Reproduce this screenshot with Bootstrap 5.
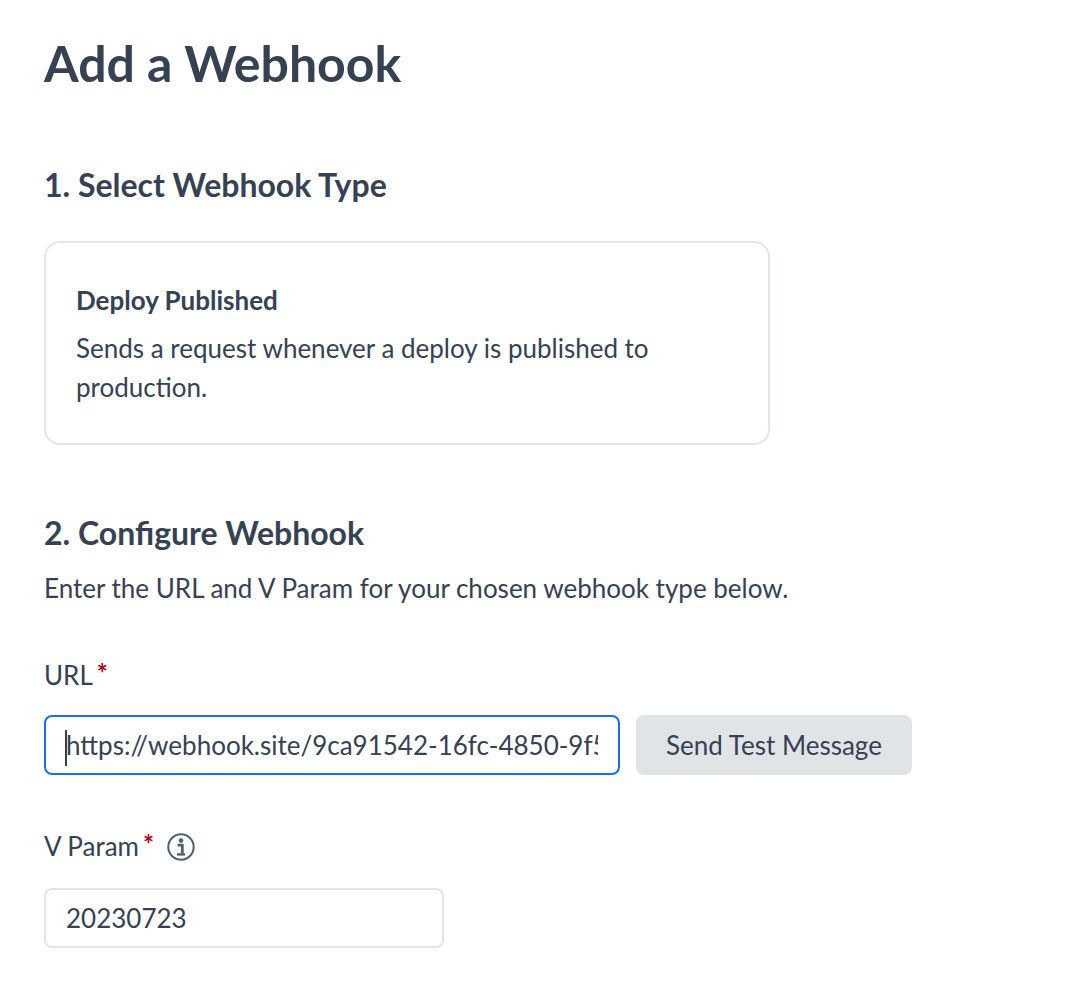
<!DOCTYPE html>
<html lang="en">
<head>
<meta charset="utf-8">
<title>Add a Webhook</title>
<link href="https://cdn.jsdelivr.net/npm/bootstrap@5.3.0/dist/css/bootstrap.min.css" rel="stylesheet">
<style>
body{font-family:Lato,"Liberation Sans",sans-serif;color:#364154;background:#fff;font-size:26px;line-height:39px}
.wh-page{padding:33px 0 0 44px;width:1092px}
.wh-title{font-size:50px;font-weight:700;line-height:60px;margin:0;color:#364154}
.wh-h2{font-size:32px;font-weight:700;line-height:40px;margin:0;color:#364154}
.wh-s1{margin-top:72px}
.wh-box{margin-top:36px;width:726px;height:204px;border:2px solid #e2e5e9;border-radius:16px;padding:38px 30px}
.wh-box-title{font-weight:700;font-size:26px;line-height:39px;margin-bottom:9px}
.wh-s2{margin-top:68px}
.wh-desc{margin-top:16px;margin-bottom:0}
.wh-label{line-height:39px;margin:0}
.wh-req{color:#b3001e;font-size:26px;font-weight:700;line-height:20px;margin-left:4px;margin-bottom:5px}
.wh-url-label{margin-top:48px}
.wh-url-row{margin-top:20px}
.wh-input{font-family:inherit;font-size:26px;color:#364154;height:60px;border-radius:8px;padding:0 20px;background:#fff;outline:0}
.wh-url{width:576px;border:2px solid #1a6cf5;caret-color:#364154}
.wh-btn{height:60px;width:276px;background:#e1e4e7;border:0;border-radius:8px;color:#364154;font-size:26px;padding:0}
.wh-v-label{margin-top:52px}
.wh-v{width:400px;border:2px solid #e2e5e9;margin-top:22px;display:block}
.wh-cursor{position:absolute;left:21px;top:15px;width:2px;height:36px;background:#364154}
.wh-url-wrap{width:576px}
.wh-info{margin-left:13px}
</style>
</head>
<body>
<div class="wh-page">
  <h1 class="wh-title">Add a Webhook</h1>
  <h2 class="wh-h2 wh-s1">1. Select Webhook Type</h2>
  <div class="wh-box">
    <div class="wh-box-title">Deploy Published</div>
    <div>Sends a request whenever a deploy is published to production.</div>
  </div>
  <h2 class="wh-h2 wh-s2">2. Configure Webhook</h2>
  <p class="wh-desc">Enter the URL and V Param for your chosen webhook type below.</p>
  <p class="wh-label wh-url-label d-flex align-items-center">URL<span class="wh-req">*</span></p>
  <div class="d-flex gap-3 wh-url-row">
    <div class="position-relative wh-url-wrap">
      <input class="wh-input wh-url" type="text" value="https://webhook.site/9ca91542-16fc-4850-9f5e-2b7d">
      <span class="wh-cursor"></span>
    </div>
    <button class="btn wh-btn" type="button">Send Test Message</button>
  </div>
  <p class="wh-label wh-v-label d-flex align-items-center">V Param<span class="wh-req">*</span>
    <svg class="wh-info" width="28" height="28" viewBox="0 0 28 28" fill="none" stroke="#4a6074" stroke-width="2"><circle cx="14" cy="14" r="12.7"/><circle cx="14" cy="7.6" r="2.3" fill="#4a6074" stroke="none"/><path d="M10.5 12.2h4.8v8.6" stroke-width="2.8"/><path d="M10 21.4h8" stroke-width="2.4"/></svg>
  </p>
  <input class="wh-input wh-v" type="text" value="20230723">
</div>
<script src="https://cdn.jsdelivr.net/npm/bootstrap@5.3.0/dist/js/bootstrap.bundle.min.js"></script>
</body>
</html>
